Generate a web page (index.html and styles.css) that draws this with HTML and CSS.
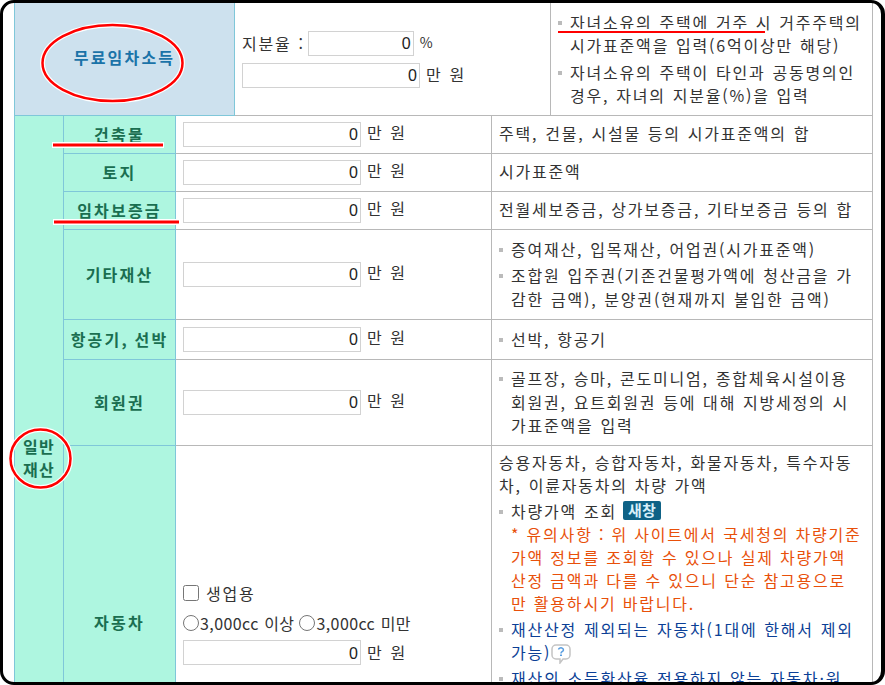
FILE: index.html
```html
<!DOCTYPE html>
<html lang="ko">
<head>
    <meta charset="UTF-8">
    <title>재산 입력</title>
    <link rel="stylesheet" href="styles.css">
</head>
<body>
    <div class="page">
        <table class="asset-table">
            <colgroup>
                <col class="col-group">
                <col class="col-name">
                <col class="col-input-a">
                <col class="col-input-b">
                <col class="col-note-a">
                <col class="col-note-b">
            </colgroup>
            <tr class="row-free">
                <th colspan="3" class="title-blue">무료임차소득</th>
                <td colspan="2" class="cell-input cell-share">
                    <div class="field field-share">지분율 : <input type="text" class="num num-short" value="0"> <span class="unit-small">%</span></div>
                    <div class="field"><input type="text" class="num" value="0"> <span class="unit">만 원</span></div>
                </td>
                <td class="cell-note">
                    <ul class="notes">
                        <li>자녀소유의 주택에 거주 시 거주주택의 시가표준액을 입력(6억이상만 해당)</li>
                        <li>자녀소유의 주택이 타인과 공동명의인 경우, 자녀의 지분율(%)을 입력</li>
                    </ul>
                </td>
            </tr>
            <tr class="row-s">
                <th rowspan="7" class="group">일반<br>재산</th>
                <th>건축물</th>
                <td colspan="2" class="cell-input"><input type="text" class="num" value="0"> <span class="unit">만 원</span></td>
                <td colspan="2" class="cell-note">주택, 건물, 시설물 등의 시가표준액의 합</td>
            </tr>
            <tr class="row-s">
                <th>토지</th>
                <td colspan="2" class="cell-input"><input type="text" class="num" value="0"> <span class="unit">만 원</span></td>
                <td colspan="2" class="cell-note">시가표준액</td>
            </tr>
            <tr class="row-s">
                <th>임차보증금</th>
                <td colspan="2" class="cell-input"><input type="text" class="num" value="0"> <span class="unit">만 원</span></td>
                <td colspan="2" class="cell-note">전월세보증금, 상가보증금, 기타보증금 등의 합</td>
            </tr>
            <tr class="row-other">
                <th>기타재산</th>
                <td colspan="2" class="cell-input"><input type="text" class="num" value="0"> <span class="unit">만 원</span></td>
                <td colspan="2" class="cell-note">
                    <ul class="notes">
                        <li>증여재산, 입목재산, 어업권(시가표준액)</li>
                        <li>조합원 입주권(기존건물평가액에 청산금을 가감한 금액), 분양권(현재까지 불입한 금액)</li>
                    </ul>
                </td>
            </tr>
            <tr class="row-m">
                <th>항공기, 선박</th>
                <td colspan="2" class="cell-input"><input type="text" class="num" value="0"> <span class="unit">만 원</span></td>
                <td colspan="2" class="cell-note">
                    <ul class="notes">
                        <li>선박, 항공기</li>
                    </ul>
                </td>
            </tr>
            <tr class="row-club">
                <th>회원권</th>
                <td colspan="2" class="cell-input"><input type="text" class="num" value="0"> <span class="unit">만 원</span></td>
                <td colspan="2" class="cell-note">
                    <ul class="notes">
                        <li>골프장, 승마, 콘도미니엄, 종합체육시설이용 회원권, 요트회원권 등에 대해 지방세정의 시가표준액을 입력</li>
                    </ul>
                </td>
            </tr>
            <tr class="row-car">
                <th>자동차</th>
                <td colspan="2" class="cell-input">
                    <div class="field"><input type="checkbox" class="check"> <span class="opt">생업용</span></div>
                    <div class="field field-radio">
                        <input type="radio" name="cc" class="check"><span>3,000cc 이상</span>
                        <input type="radio" name="cc" class="check"><span>3,000cc 미만</span>
                    </div>
                    <div class="field"><input type="text" class="num" value="0"> <span class="unit">만 원</span></div>
                </td>
                <td colspan="2" class="cell-note cell-top">
                    승용자동차, 승합자동차, 화물자동차, 특수자동차, 이륜자동차의 차량 가액
                    <ul class="notes notes-car">
                        <li>차량가액 조회 <span class="badge">새창</span>
                            <p class="warn">* 유의사항 : 위 사이트에서 국세청의 차량기준 가액 정보를 조회할 수 있으나 실제 차량가액 산정 금액과 다를 수 있으니 단순 참고용으로 만 활용하시기 바랍니다.</p>
                        </li>
                        <li class="link">재산산정 제외되는 자동차(1대에 한해서 제외 가능)<svg class="help" width="20" height="20" viewBox="0 0 20 20"><path d="M5 1h10a4 4 0 0 1 4 4v6a4 4 0 0 1-4 4h-3l-3 4v-4h-4a4 4 0 0 1-4-4v-6a4 4 0 0 1 4-4z" fill="#fff" stroke="#c4c4c4" stroke-width="1.500"/><path d="M7.500 5.500a2.500 2 0 1 1 3.500 2.200q-1 .5-1 1.800" fill="none" stroke="#5a9ee0" stroke-width="1.500"/><rect x="9" y="10.500" width="2" height="1.500" fill="#5a9ee0"/></svg></li>
                        <li class="link">재산의 소득환산율 적용하지 않는 자동차·원<br>동기</li>
                    </ul>
                </td>
            </tr>
        </table>

        <!-- 빨간 표시 -->
        <svg class="marks" width="885" height="685" viewBox="0 0 885 685">
            <g fill="none" stroke="#fff" stroke-width="5">
                <ellipse cx="112.500" cy="63" rx="70" ry="38"/>
                <ellipse cx="40.500" cy="458.500" rx="30" ry="29"/>
                <path d="M52 145h112M53 222h127M558 32h207" stroke-width="6"/>
            </g>
            <g fill="none" stroke="#f00">
                <ellipse cx="112.500" cy="63" rx="70" ry="38" stroke-width="2.500"/>
                <ellipse cx="40.500" cy="458.500" rx="30" ry="29" stroke-width="2.500"/>
                <path d="M53 145h110M54 222h125" stroke-width="3"/>
                <path d="M558 32h207" stroke-width="2"/>
            </g>
        </svg>
        <div class="frame"></div>
    </div>
</body>
</html>
```

FILE: styles.css
```css
html, body {
    margin: 0;
    height: 685px;
    overflow: hidden;
    background-color: #fff;
}
.page {
    height: 685px;
    overflow: hidden;
    padding: 2px 0 0 14px;
    box-sizing: border-box;
    font-family: "Noto Sans CJK KR", "Liberation Sans", sans-serif;
    font-size: 16px;
    letter-spacing: 1.8px;
    word-spacing: 0.6px;
    color: #333;
}
.frame {
    position: absolute;
    left: 0;
    top: 0;
    width: 885px;
    height: 685px;
    box-sizing: border-box;
    border: 3px solid #000;
    border-right-width: 4px;
    border-radius: 14px;
    pointer-events: none;
}
.marks {
    position: absolute;
    left: 0;
    top: 0;
    pointer-events: none;
}
.asset-table {
    table-layout: fixed;
    width: 859px;
    border-collapse: collapse;
    border-left: 1px solid #7fc7d9;
}
.col-group { width: 49px; }
.col-name { width: 112px; }
.col-input-a { width: 59px; }
.col-input-b { width: 257px; }
.col-note-a { width: 59px; }
.col-note-b { width: 322px; }

th, td {
    border: 1px solid #b8b8b8;
    padding: 0;
}
th {
    background-color: #aef6e0;
    border-color: #7fc7d9;
    color: #1a6e50;
    font-size: 16px;
    font-weight: 700;
    letter-spacing: 2.2px;
    word-spacing: -1px;
    text-align: center;
    padding-bottom: 2px;
}
th.title-blue {
    background-color: #cde1ee;
    color: #1a73a8;
    padding-bottom: 4px;
}
th.group {
    letter-spacing: 1.400px;
    line-height: 23px;
    padding-bottom: 0;
}
.row-free { height: 113px; }
.row-s { height: 38px; }
.row-other { height: 90px; }
.row-m { height: 40px; }
.row-club { height: 86px; }
.row-car { height: 354px; }

.cell-input {
    padding-left: 7px;
}
.cell-input > .num {
    margin-bottom: 2px;
}
.cell-note {
    padding: 0 7px;
    line-height: 23.500px;
}
.row-s .cell-note {
    padding-bottom: 2px;
}
.cell-top {
    vertical-align: top;
    padding-top: 5px;
    line-height: 23px;
}
.field {
    display: flex;
    align-items: center;
    gap: 5px;
    height: 30px;
}
.cell-share .field {
    height: 32px;
}
.field-share {
    gap: 3px;
}
.field-share .unit-small {
    margin-left: 3px;
}
.field-radio {
    gap: 0;
    letter-spacing: 0.400px;
}
.field-radio span {
    margin: 0 5px 0 1px;
}
.num {
    width: 178px;
    height: 25px;
    box-sizing: border-box;
    border: 1px solid #d2d2d2;
    padding: 2px 2px 0 0;
    font-family: "Liberation Sans", sans-serif;
    font-size: 16px;
    letter-spacing: 0;
    text-align: right;
    color: #222;
    vertical-align: middle;
}
.num-short {
    width: 106px;
}
.unit {
    margin-left: 1px;
    position: relative;
    top: -1px;
}
.cell-input > .unit {
    margin-left: -1px;
    top: 0;
}
.unit-small {
    font-size: 14px;
    letter-spacing: 0;
    position: relative;
    top: -1px;
}
.check {
    width: 16px;
    height: 16px;
    margin: 0;
}
.opt {
    margin-left: 2px;
}
.notes {
    list-style: none;
    margin: 0;
    padding: 0;
}
.notes li {
    position: relative;
    padding-left: 12px;
    margin: 3px 0;
}
.notes li::before {
    content: "";
    position: absolute;
    left: 0;
    top: 10px;
    width: 4px;
    height: 4px;
    background-color: #bbb;
}
.notes-car {
    margin-top: 3px;
}
.warn {
    margin: 0;
    color: #e8500a;
    word-spacing: 0;
}
.link {
    color: #0b3f96;
}
.badge {
    display: inline-block;
    width: 38px;
    height: 19px;
    line-height: 18px;
    margin-left: -1px;
    background-color: #0f6286;
    border-radius: 2px;
    color: #d8f0fa;
    font-size: 15px;
    font-weight: 700;
    letter-spacing: 0;
    text-align: center;
    vertical-align: 2px;
}
.help {
    vertical-align: -5px;
}
```
